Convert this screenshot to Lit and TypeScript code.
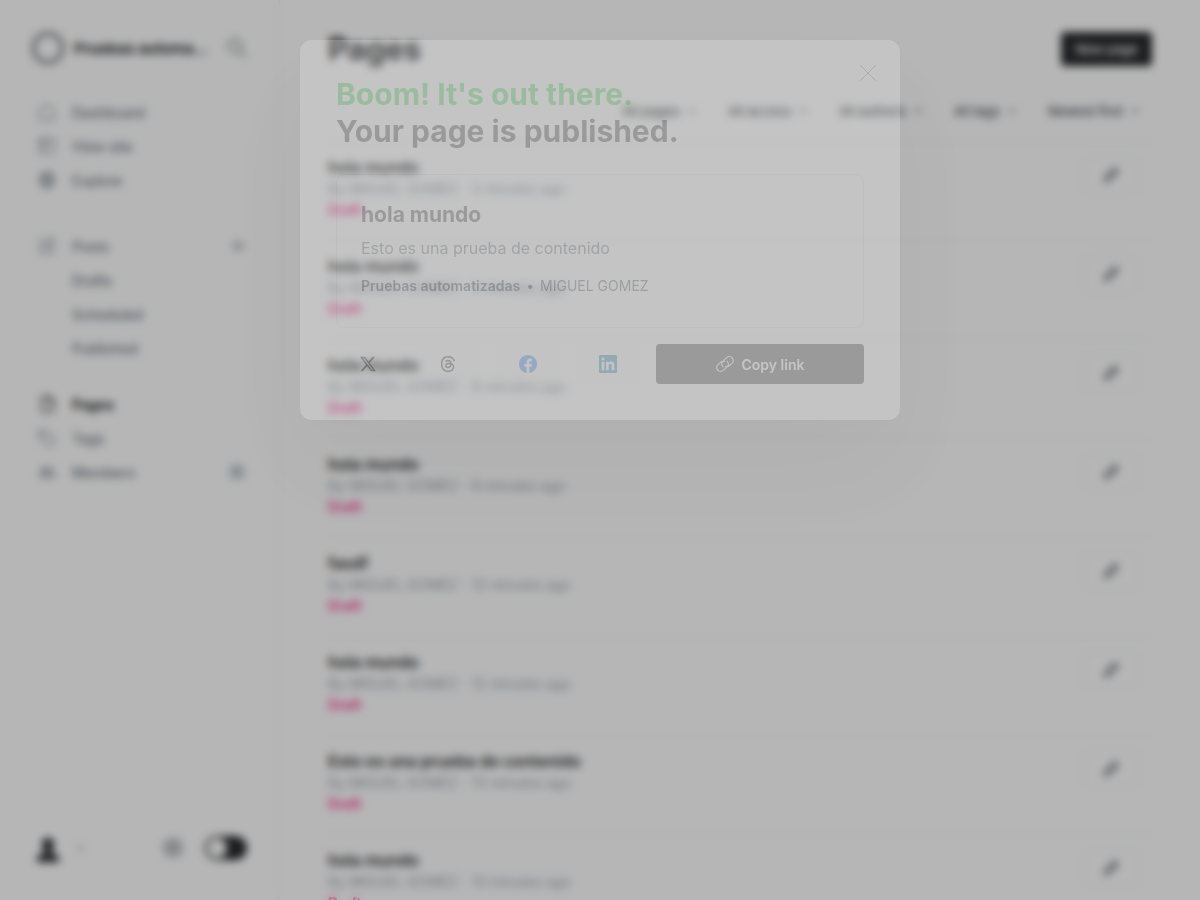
import { LitElement, html, css, svg, nothing } from "lit";
import { customElement } from "lit/decorators.js";

const line = (body: unknown) => html`<svg viewBox="0 0 24 24" aria-hidden="true" fill="none" stroke="currentColor" stroke-width="1.5" stroke-linecap="round" stroke-linejoin="round">${body}</svg>`;
const solid = (body: unknown) => html`<svg viewBox="0 0 24 24" aria-hidden="true" fill="currentColor">${body}</svg>`;

const icons = {
  search: line(svg`<circle cx="9.5" cy="9.5" r="8"/><path d="M15.5 15.5 23 23"/>`),
  home: line(svg`<path d="M2 10.5 12 1.5l10 9V20a2.5 2.5 0 0 1-2.5 2.5h-15A2.5 2.5 0 0 1 2 20z"/>`),
  site: line(svg`<rect x="2" y="2" width="20" height="20" rx="2.5"/><path d="M8.5 2v20M8.5 9H22M4 5h4M4 9h4"/>`),
  globe: line(svg`<circle cx="12" cy="12" r="10"/><path d="M2 12h20M12 2c-6 6-6 14 0 20M12 2c6 6 6 14 0 20M4 6.500h16M4 17.500h16"/>`),
  posts: line(svg`<path d="M13 4H4.500A2 2 0 0 0 2.500 6v13.500a2 2 0 0 0 2 2H18a2 2 0 0 0 2-2V12M9.500 14.500l1-4L20 1.500l2.500 2.500-9 9.500z"/>`),
  plus: line(svg`<path d="M12 1v22M1 12h22" stroke-width="2.500"/>`),
  page: line(svg`<path d="M7 2h7.500L20.500 8v12a2 2 0 0 1-2 2H7a2 2 0 0 1-2-2V4a2 2 0 0 1 2-2zM14 2v6.500h6.500" stroke-width="2"/>`),
  tag: line(svg`<path d="M1.500 2.500h9.500L22.500 14a2 2 0 0 1 0 2.500l-6 6a2 2 0 0 1-2.800 0L1.500 11z"/><circle cx="6.500" cy="7" r="1.300"/>`),
  members: line(svg`<circle cx="8" cy="9" r="3.500"/><circle cx="17" cy="10" r="2.800"/><path d="M2 19c0-7 12-7 12 0zM14.500 15c3.500-2.500 8 0 8 4H14"/>`),
  pencil: line(svg`<path d="m3 21 1.500-6L17 2.500 21.500 7 9 19.500zM14.500 5 19 9.500M4.500 15 9 19.500M7 17 18 6"/>`),
  gear: solid(svg`<path d="M12 1l3 2 3.500-.5 1 3.500 3 2-1.500 3.500L22.500 15l-3 2-1 3.500-3.500-.5-3 3-3-3-3.500.5-1-3.500-3-2L3 11.500 1.500 8l3-2 1-3.500L9 3z"/>`),
  user: solid(svg`<path d="M12 0c4 0 6 2.500 6 6.500 0 3-1.500 5.500-3 6.500v2c4 .6 8 2 8 7v2H1v-2c0-5 4-6.400 8-7v-2c-1.500-1-3-3.500-3-6.500C6 2.500 8 0 12 0z"/>`),
  close: line(svg`<path d="M.75 .75l22.500 22.500M23.250 .75.75 23.250"/>`),
  link: line(svg`<path d="M9.400 15.800a4.800 4.800 0 0 1-.2-7.600l5.200-4.700a5.100 5.100 0 0 1 7.200.4 5.200 5.200 0 0 1-.4 7.200l-3.600 3.300a5.100 5.100 0 0 1-5 1M14.600 8.200a4.800 4.800 0 0 1 .2 7.600l-5.200 4.700a5.100 5.100 0 0 1-7.200-.4 5.200 5.200 0 0 1 .4-7.200l3.600-3.300a5.100 5.100 0 0 1 5-1"/>`),
  chevron: line(svg`<path d="m3 7 9 9 9-9" stroke-width="3.500"/>`),
  x: solid(svg`<path d="M18.901 1.153h3.680l-8.040 9.190L24 22.846h-7.406l-5.800-7.584-6.638 7.584H.474l8.600-9.830L0 1.154h7.594l5.243 6.932zM17.610 20.644h2.039L6.486 3.240H4.298z"/>`),
  threads: solid(svg`<path d="M12.186 24h-.007c-3.581-.024-6.334-1.205-8.184-3.509C2.350 18.440 1.500 15.586 1.472 12.010v-.017c.030-3.579.879-6.430 2.525-8.482C5.845 1.205 8.600.024 12.180 0h.014c2.746.020 5.043.725 6.826 2.098 1.677 1.290 2.858 3.130 3.509 5.467l-2.040.569c-1.104-3.960-3.898-5.984-8.304-6.015-2.910.022-5.110.936-6.540 2.717C4.307 6.504 3.616 8.914 3.589 12c.027 3.086.718 5.496 2.057 7.164 1.430 1.783 3.631 2.698 6.540 2.717 2.623-.020 4.358-.631 5.800-2.045 1.647-1.613 1.618-3.593 1.090-4.798-.310-.710-.873-1.300-1.634-1.750-.192 1.352-.622 2.446-1.284 3.272-.886 1.102-2.140 1.704-3.730 1.790-1.202.065-2.361-.218-3.259-.801-1.063-.689-1.685-1.740-1.752-2.964-.065-1.190.408-2.285 1.330-3.082.880-.760 2.119-1.207 3.583-1.291a13.853 13.853 0 0 1 3.020.142c-.126-.742-.375-1.332-.750-1.757-.513-.586-1.308-.883-2.359-.890h-.029c-.844 0-1.992.232-2.721 1.320L7.734 7.847c.980-1.454 2.568-2.256 4.478-2.256h.044c3.194.020 5.097 1.975 5.287 5.388.108.046.216.094.321.142 1.490.700 2.580 1.761 3.154 3.070.797 1.820.871 4.790-1.548 7.158-1.850 1.810-4.094 2.628-7.277 2.650Zm1.003-11.690c-.242 0-.487.007-.739.021-1.836.103-2.980.946-2.916 2.143.067 1.256 1.452 1.839 2.784 1.767 1.224-.065 2.818-.543 3.086-3.710a10.500 10.500 0 0 0-2.215-.221z"/>`),
  facebook: solid(svg`<path d="M24 12.073C24 5.405 18.627 0 12 0S0 5.405 0 12.073C0 18.100 4.388 23.094 10.125 24v-8.437H7.078v-3.490h3.047v-2.660c0-3.025 1.792-4.697 4.533-4.697 1.312 0 2.686.236 2.686.236v2.971h-1.513c-1.491 0-1.956.930-1.956 1.886v2.264h3.328l-.532 3.490h-2.796V24C19.612 23.094 24 18.100 24 12.073z"/>`),
  linkedin: solid(svg`<path d="M20.447 20.452h-3.554v-5.569c0-1.328-.027-3.037-1.852-3.037-1.853 0-2.136 1.445-2.136 2.939v5.667H9.351V9h3.414v1.561h.046c.477-.900 1.637-1.850 3.370-1.850 3.601 0 4.267 2.370 4.267 5.455v6.286zM5.337 7.433a2.062 2.062 0 1 1 0-4.125 2.062 2.062 0 0 1 0 4.125zM7.119 20.452H3.555V9h3.564v11.452zM22.225 0H1.771C.792 0 0 .774 0 1.729v20.542C0 23.227.792 24 1.771 24h20.451C23.200 24 24 23.227 24 22.271V1.729C24 .774 23.200 0 22.222 0h.003z"/>`),
};

type NavItem = { label: string; icon?: unknown; active?: boolean; add?: boolean; count?: number };

const navGroups: NavItem[][] = [
  [{ label: "Dashboard", icon: icons.home }, { label: "View site", icon: icons.site }, { label: "Explore", icon: icons.globe }],
  [{ label: "Posts", icon: icons.posts, add: true }, { label: "Drafts" }, { label: "Scheduled" }, { label: "Published" }],
  [{ label: "Pages", icon: icons.page, active: true }, { label: "Tags", icon: icons.tag }, { label: "Members", icon: icons.members, count: 0 }],
];

const filters = ["All pages", "All access", "All authors", "All tags", "Newest first"];

const pages = [
  { title: "hola mundo", age: 3 },
  { title: "hola mundo", age: 5 },
  { title: "hola mundo", age: 8 },
  { title: "hola mundo", age: 8 },
  { title: "fasdf", age: 12 },
  { title: "hola mundo", age: 12 },
  { title: "Esto es una prueba de contenido", age: 13 },
  { title: "hola mundo", age: 13 },
];

const reset = css`
  :host { display: block; box-sizing: border-box; }
  *, *::before, *::after { box-sizing: border-box; }
  svg { display: block; width: 100%; height: 100%; }
  h1, h2, h3, p, ul { margin: 0; padding: 0; }
  ul { list-style: none; }
  a { color: inherit; text-decoration: none; }
  button { font: inherit; color: inherit; margin: 0; padding: 0; border: 0; background: none; cursor: pointer; }
`;

@customElement("app-sidebar")
export class AppSidebar extends LitElement {
  static styles = [reset, css`
    :host { display: flex; flex-direction: column; border-right: 1px solid #e6ecf2; height: 100%; }
    .brand { display: flex; align-items: center; padding: 32px 32px 0; height: 64px; }
    .logo { width: 32px; height: 32px; border-radius: 50%; border: 3px solid #4c5055; flex: none; }
    .name { flex: 1; min-width: 0; margin: 0 16px 0 10px; font-size: 15px; font-weight: 700; color: #15171a;
      overflow: hidden; text-overflow: ellipsis; white-space: nowrap; }
    .search { width: 20px; height: 20px; color: #394047; flex: none; }
    nav { padding: 31px 32px 0 38px; }
    ul + ul { margin-top: 32px; }
    ul + ul + ul { margin-top: 22px; }
    .item { display: flex; align-items: center; height: 34px; }
    .item a { display: flex; align-items: center; flex: 1; gap: 16px; font-size: 14px; font-weight: 500; color: #626d79; }
    .item .active { font-weight: 700; color: #15171a; }
    .icon { width: 18px; height: 18px; flex: none; }
    .add { width: 14px; height: 14px; margin-right: 2px; color: #626d79; }
    .count { min-width: 20px; height: 20px; border-radius: 10px; background: #e3e8eb; color: #626d79;
      font-size: 12px; font-weight: 600; line-height: 20px; text-align: center; }
    .foot { margin-top: auto; display: flex; align-items: center; padding: 0 32px 32px; height: 72px; }
    .account { display: flex; align-items: center; gap: 12px; margin-right: auto; }
    .avatar { width: 32px; height: 32px; padding: 4px 4px 0; border-radius: 50%; color: #15171a; }
    .caret { width: 9px; height: 9px; color: #7c8b9a; }
    .gear { width: 24px; height: 24px; color: #b8bdc2; margin-right: 20px; }
    .switch { appearance: none; margin: 0; width: 42px; height: 24px; border-radius: 12px; background: #15171a; padding: 2px; cursor: pointer; }
    .switch::before { content: ""; display: block; width: 20px; height: 20px; border-radius: 50%; background: #fff; }
  `];

  render() {
    return html`
      <div class="brand">
        <span class="logo"></span>
        <span class="name">Pruebas automatizadas</span>
        <button class="search" aria-label="Search">${icons.search}</button>
      </div>
      <nav aria-label="Main">
        ${navGroups.map((group) => html`<ul>${group.map((item) => html`
          <li class="item">
            <a href="#" class=${item.active ? "active" : ""}><span class="icon">${item.icon ?? nothing}</span>${item.label}</a>
            ${item.add ? html`<button class="add" aria-label="New post">${icons.plus}</button>` : nothing}
            ${item.count !== undefined ? html`<span class="count">${item.count}</span>` : nothing}
          </li>`)}</ul>`)}
      </nav>
      <div class="foot">
        <button class="account" aria-label="Account"><span class="avatar">${icons.user}</span><span class="caret">${icons.chevron}</span></button>
        <button class="gear" aria-label="Settings">${icons.gear}</button>
        <input class="switch" type="checkbox" aria-label="Night shift">
      </div>`;
  }
}

@customElement("app-pages")
export class AppPages extends LitElement {
  static styles = [reset, css`
    :host { padding: 32px 48px 0; overflow: hidden; }
    .head { display: flex; justify-content: space-between; align-items: center; height: 34px; }
    h1 { font-size: 31px; line-height: 34px; font-weight: 700; color: #15171a; }
    .new { height: 34px; padding: 0 14px; border-radius: 4px; background: #15171a; color: #fff; font-size: 13px; font-weight: 500; }
    .filters { display: flex; justify-content: flex-end; gap: 32px; height: 75px; padding: 28px 13px 0 0; }
    .filter { display: flex; align-items: center; gap: 8px; height: 34px; font-size: 13px; font-weight: 500; color: #394047; }
    .filter span { width: 8px; height: 8px; }
    .row { display: flex; justify-content: space-between; align-items: flex-start; height: 99px; padding-top: 14px; border-top: 1px solid #f1f3f4; }
    .row h3 { font-size: 16px; line-height: 22px; font-weight: 600; color: #15171a; }
    .by { font-size: 14px; line-height: 21px; color: #95a1ad; }
    .status { font-size: 14px; line-height: 22px; font-weight: 600; color: #fb2d8d; }
    .edit { width: 54px; height: 36px; margin: 1px 14px 0 0; padding: 8px 17px; border: 1px solid #eaf0f6; border-radius: 4px; color: #394047; }
  `];

  render() {
    return html`
      <div class="head"><h1>Pages</h1><button class="new">New page</button></div>
      <div class="filters">${filters.map((f) => html`<button class="filter">${f}<span>${icons.chevron}</span></button>`)}</div>
      <ul>${pages.map((p) => html`
        <li class="row">
          <div>
            <h3>${p.title}</h3>
            <p class="by">By MIGUEL GOMEZ - ${p.age} minutes ago</p>
            <p class="status">Draft</p>
          </div>
          <button class="edit" aria-label="Edit page">${icons.pencil}</button>
        </li>`)}</ul>`;
  }
}

@customElement("publish-modal")
export class PublishModal extends LitElement {
  static styles = [reset, css`
    :host { position: relative; width: 100%; max-width: 600px; padding: 36px; border-radius: 12px; background: #fff; opacity: .2;
      box-shadow: 0 4px 12px rgba(0, 0, 0, .03), 0 50px 100px rgba(0, 0, 0, .16); }
    h2 { font-size: 30px; line-height: 37px; font-weight: 700; color: #2c2c2c; }
    h2 .boom { display: block; color: #30cf43; }
    .close { position: absolute; top: 25px; right: 24px; width: 16px; height: 16px; color: #394047; }
    .close svg { stroke-width: 1; }
    .card { display: block; margin-top: 24px; padding: 24px 24px 32px; border: 1px solid #dfe1e3; border-radius: 8px; }
    h3 { font-size: 21px; line-height: 32px; font-weight: 700; color: #2c2c2c; }
    .excerpt { margin-top: 4px; font-size: 16px; line-height: 26px; color: #505860; }
    .meta { margin-top: 16px; font-size: 14px; line-height: 18px; color: #394047; display: flex; gap: 6px; }
    .meta b { font-weight: 600; }
    .share { display: flex; gap: 16px; margin-top: 16px; }
    .net { flex: 0 0 64px; height: 40px; padding: 11px 23px; border-radius: 4px; background: #f6f7f8; }
    .x, .threads { padding: 12px 24px; color: #15171a; }
    .facebook { color: #1877f2; }
    .linkedin { color: #0a7fae; }
    .copy { flex: 1; height: 40px; border-radius: 4px; background: #2c2c2c; color: #fff; font-size: 14px; font-weight: 600;
      display: flex; align-items: center; justify-content: center; gap: 8px; }
    .copy span { width: 18px; height: 18px; }
  `];

  render() {
    return html`
      <button class="close" aria-label="Close">${icons.close}</button>
      <h2><span class="boom">Boom! It's out there.</span>Your page is published.</h2>
      <a class="card" href="#">
        <h3>hola mundo</h3>
        <p class="excerpt">Esto es una prueba de contenido</p>
        <p class="meta"><b>Pruebas automatizadas</b><span>•</span><span>MIGUEL GOMEZ</span></p>
      </a>
      <div class="share">
        <a class="net x" href="#" aria-label="Share on X">${icons.x}</a>
        <a class="net threads" href="#" aria-label="Share on Threads">${icons.threads}</a>
        <a class="net facebook" href="#" aria-label="Share on Facebook">${icons.facebook}</a>
        <a class="net linkedin" href="#" aria-label="Share on LinkedIn">${icons.linkedin}</a>
        <button class="copy"><span>${icons.link}</span>Copy link</button>
      </div>`;
  }
}

@customElement("app-root")
export class AppRoot extends LitElement {
  static styles = [reset, css`
    :host { display: block; height: 100vh; overflow: hidden; background: #fff; font-family: Inter, sans-serif; }
    .shell { display: grid; grid-template-columns: 280px minmax(0, 1fr); height: 100%; }
    .backdrop { position: fixed; inset: 0; display: flex; justify-content: center; align-items: flex-start; padding: 40px;
      overflow: hidden; background: rgba(40, 40, 42, .34); backdrop-filter: blur(4px); }
  `];

  render() {
    return html`
      <div class="shell"><app-sidebar></app-sidebar><app-pages></app-pages></div>
      <div class="backdrop"><publish-modal role="dialog" aria-modal="true" aria-label="Page published"></publish-modal></div>`;
  }
}
